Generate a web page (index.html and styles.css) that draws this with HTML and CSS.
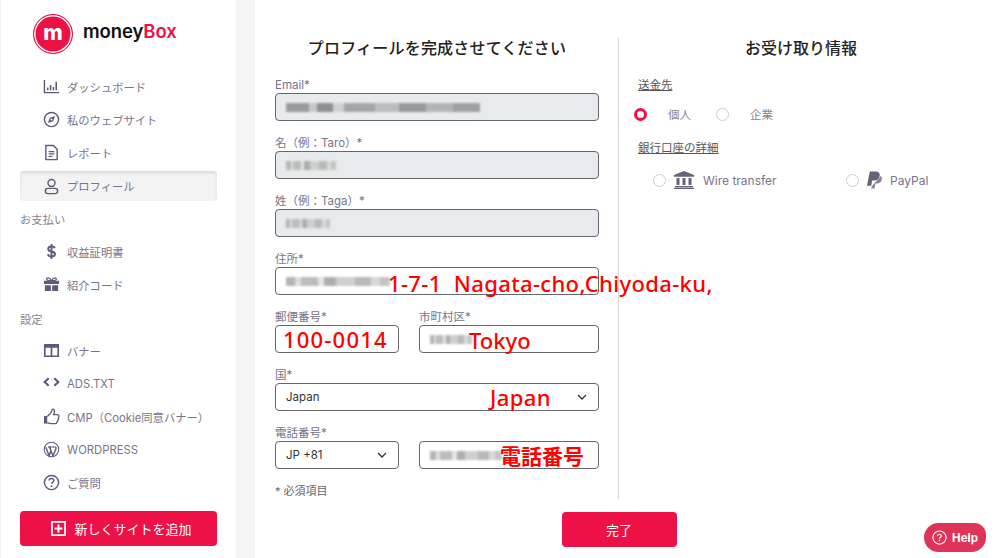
FILE: index.html
```html
<!DOCTYPE html>
<html lang="ja">
<head>
  <meta charset="UTF-8" />
  <meta name="viewport" content="width=device-width, initial-scale=1.0" />
  <title>moneyBox - プロフィール</title>
  <link rel="stylesheet" href="styles.css">
</head>
<body>
  <div class="app">
    <aside class="sidebar">
      <div class="logo">
        <div class="logo-mark"><span>m</span></div>
        <div class="logo-text">money<span>Box</span></div>
      </div>
      <nav class="nav">
        <a class="nav-item">
          <svg class="icon" viewBox="0 0 18 18"><path d="M1.5 2v13.5h15.5" fill="none" stroke="currentColor" stroke-width="1.5"/><path d="M5 10v3M8 7.5V13M11 9.5V13M14 4v9" fill="none" stroke="currentColor" stroke-width="1.6"/></svg>
          ダッシュボード
        </a>
        <a class="nav-item">
          <svg class="icon" viewBox="0 0 18 18"><circle cx="9" cy="9" r="7.5" fill="none" stroke="currentColor" stroke-width="1.5"/><path d="M12.8 5.2 10.8 10.8 5.2 12.8 7.2 7.2z" fill="currentColor"/><circle cx="9" cy="9" r="1" fill="#fff"/></svg>
          私のウェブサイト
        </a>
        <a class="nav-item">
          <svg class="icon" viewBox="0 0 18 18"><path d="M3 1.5h8l4 4v11H3z" fill="none" stroke="currentColor" stroke-width="1.5" stroke-linejoin="round"/><path d="M6 8h6M6 10.5h6M6 13h4" stroke="currentColor" stroke-width="1.3"/></svg>
          レポート
        </a>
        <a class="nav-item active">
          <svg class="icon" viewBox="0 0 18 18"><circle cx="9" cy="5.2" r="3.7" fill="none" stroke="currentColor" stroke-width="1.5"/><rect x="2.5" y="11" width="13" height="5.5" rx="2.7" fill="none" stroke="currentColor" stroke-width="1.5"/></svg>
          プロフィール
        </a>
        <div class="nav-title">お支払い</div>
        <a class="nav-item">
          <svg class="icon" viewBox="0 0 18 18"><path d="M12.5 5.5C12 4 10.7 3.6 9 3.6c-2 0-3.5 1-3.5 2.7 0 3.8 7.2 1.7 7.2 5.4 0 1.7-1.600 2.700-3.700 2.700-2 0-3.400-.8-3.800-2.400M9 1v16" fill="none" stroke="currentColor" stroke-width="2"/></svg>
          収益証明書
        </a>
        <a class="nav-item">
          <svg class="icon" viewBox="0 0 18 18"><path d="M1 5h16v3.500H1zM2 9.700h6.300V16H2zM9.700 9.700H16V16H9.700z" fill="currentColor"/><path d="M9 5C7 1 3.500 1.500 4 3.500 4.400 5 7 5 9 5c2 0 4.600 0 5-1.500C14.500 1.500 11 1 9 5z" fill="none" stroke="currentColor" stroke-width="1.400"/></svg>
          紹介コード
        </a>
        <div class="nav-title settings">設定</div>
        <a class="nav-item">
          <svg class="icon" viewBox="0 0 18 18"><path d="M1 2h16v14H1zM2.800 6v8.200h5.300V6zM9.900 6v8.200h5.300V6z" fill="currentColor" fill-rule="evenodd"/></svg>
          バナー
        </a>
        <a class="nav-item">
          <svg class="icon" viewBox="0 0 18 18"><path d="M6 3.500 1.800 7.500 6 11.500M12 3.500l4.200 4-4.200 4" fill="none" stroke="currentColor" stroke-width="2.200"/></svg>
          ADS.TXT
        </a>
        <a class="nav-item">
          <svg class="icon" viewBox="0 0 18 18"><path d="M1 8.500h3.500V16.500H1z" fill="currentColor"/><path d="M4.500 9 8 5.500c1-1.200 1.500-2.500 1.500-3.500 0-1.300 2.700-1 2.700 1.500 0 1.300-.7 2.500-1 3.500h4.300c1.700 0 1.700 2.300.7 3 .7 1 .3 2.200-.5 2.600.3 1-.2 2-1 2.300 0 1-.7 1.600-1.700 1.600H8c-1.500 0-2-.8-3.500-.8" fill="none" stroke="currentColor" stroke-width="1.400"/></svg>
          CMP（Cookie同意バナー）
        </a>
        <a class="nav-item">
          <svg class="icon" viewBox="0 0 18 18"><circle cx="9" cy="9" r="7.700" fill="none" stroke="currentColor" stroke-width="1.100"/><path d="M3 6.500 6.500 15.500 8.500 10 7 6.500M7 6.500 10.500 15.500 13.500 9c.7-1.500.200-2.500-.5-3.200M5.500 6.300h3.500M9.800 6.300h2.200" fill="none" stroke="currentColor" stroke-width="1.500"/></svg>
          WORDPRESS
        </a>
        <a class="nav-item">
          <svg class="icon" viewBox="0 0 18 18"><circle cx="9" cy="9" r="7.500" fill="none" stroke="currentColor" stroke-width="1.500"/><path d="M6.500 7c0-1.500 1.100-2.300 2.500-2.300s2.500.8 2.500 2.100c0 1.900-2.500 1.900-2.500 3.800" fill="none" stroke="currentColor" stroke-width="1.500"/><circle cx="9" cy="13" r="1" fill="currentColor"/></svg>
          ご質問
        </a>
      </nav>
      <button class="add-site">
        <svg class="add-icon" viewBox="0 0 15 15"><path d="M0 0h15v15H0zM1.800 1.800v11.400h11.400V1.800zM6.500 3.500h2v3h3v2h-3v3h-2v-3h-3v-2h3z" fill="#fff" fill-rule="evenodd"/></svg>
        新しくサイトを追加
      </button>
    </aside>

    <div class="gutter"></div>

    <main class="main">
      <div class="columns">
        <section class="form-col">
          <h2>プロフィールを完成させてください</h2>
          <div class="field">
            <label>Email*</label>
            <div class="input disabled"><span class="blur blur-dark w-email"></span></div>
          </div>
          <div class="field">
            <label>名（例：Taro）*</label>
            <div class="input disabled"><span class="blur w-short"></span></div>
          </div>
          <div class="field">
            <label>姓（例：Taga）*</label>
            <div class="input disabled"><span class="blur w-shorter"></span></div>
          </div>
          <div class="field">
            <label>住所*</label>
            <div class="input"><span class="blur w-addr"></span></div>
          </div>
          <div class="field-row">
            <div class="field small">
              <label>郵便番号*</label>
              <div class="input"></div>
            </div>
            <div class="field grow">
              <label>市町村区*</label>
              <div class="input"><span class="blur w-city"></span></div>
            </div>
          </div>
          <div class="field">
            <label>国*</label>
            <div class="input select">
              Japan
              <svg class="chev" viewBox="0 0 10 6"><path d="M1 1l4 4 4-4" fill="none" stroke="#333" stroke-width="1.300"/></svg>
            </div>
          </div>
          <div class="field-row">
            <div class="field small">
              <label>電話番号*</label>
              <div class="input select">
                JP +81
                <svg class="chev" viewBox="0 0 10 6"><path d="M1 1l4 4 4-4" fill="none" stroke="#333" stroke-width="1.300"/></svg>
              </div>
            </div>
            <div class="field grow no-label">
              <div class="input"><span class="blur w-phone"></span></div>
            </div>
          </div>
          <p class="required">* 必須項目</p>
        </section>

        <section class="pay-col">
          <h2>お受け取り情報</h2>
          <div class="sub-title">送金先</div>
          <div class="radio-row">
            <span class="radio checked"></span><span class="radio-label">個人</span>
            <span class="radio"></span><span class="radio-label">企業</span>
          </div>
          <div class="sub-title second">銀行口座の詳細</div>
          <div class="method-row">
            <div class="method wire">
              <span class="radio"></span>
              <svg class="method-icon" viewBox="0 0 20 18"><path d="M10 0 20 4v1.800H0V4zM2.500 7h3v7h-3zM8.500 7h3v7h-3zM14.500 7h3v7h-3zM1 15h18v1.300H1zM0 16.700h20V18H0z" fill="#65627a"/></svg>
              Wire transfer
            </div>
            <div class="method">
              <span class="radio"></span>
              <svg class="method-icon paypal" viewBox="0 0 16 18"><path d="M3 0h6c3.500 0 5 1.800 4.500 4.500C13 8 10.500 9.500 7.500 9.500H5.500L4.500 15H0z" fill="#65627a"/><path d="M14.500 4.800c1.300 1 1.700 2.300 1.300 4-.6 2.700-2.700 4-5.300 4H9l-.9 5.200H4.500l.4-2.200" fill="#8a879b"/></svg>
              PayPal
            </div>
          </div>
        </section>
      </div>
      <div class="actions">
        <button class="done">完了</button>
      </div>
    </main>
  </div>

  <!-- red notes written on top of the screenshot -->
  <span class="note note-addr">1-7-1&nbsp; Nagata-cho,Chiyoda-ku,</span>
  <span class="note note-zip">100-0014</span>
  <span class="note note-city">Tokyo</span>
  <span class="note note-country">Japan</span>
  <span class="note note-phone">電話番号</span>

  <div class="help">
    <svg class="help-icon" viewBox="0 0 16 16"><circle cx="8" cy="8" r="7" fill="none" stroke="#fff" stroke-width="1.200"/><path d="M6 6.300C6 5 7 4.500 8 4.500s2 .6 2 1.700C10 7.800 8 7.600 8 9.300" fill="none" stroke="#fff" stroke-width="1.200"/><circle cx="8" cy="11.300" r=".8" fill="#fff"/></svg>
    Help
  </div>
</body>
</html>
```

FILE: styles.css
```css
* {
  box-sizing: border-box;
}
html, body {
  height: 100%;
  overflow: hidden;
}
body {
  margin: 0;
  background: #fff;
  color: #5d5a72;
  font-family: Inter, "Noto Sans CJK JP", sans-serif;
  font-size: 12px;
}
.app {
  display: flex;
  height: 558px;
}

/* sidebar */
.sidebar {
  width: 236px;
  padding: 14px 19px 0 19px;
  border-left: 1px solid #f4f4f6;
  flex-shrink: 0;
}
.logo {
  display: flex;
  align-items: center;
  gap: 10px;
  padding-left: 13px;
  height: 40px;
}
.logo-mark {
  width: 40px;
  height: 40px;
  border-radius: 50%;
  background: #ee1148;
  border: 1px solid #ee1148;
  box-shadow: inset 0 0 0 1.500px #fff;
  color: #fff;
  display: flex;
  align-items: center;
  justify-content: center;
  font-size: 21px;
  font-weight: 800;
  line-height: 1;
}
.logo-mark span {
  margin-top: -3px;
}
.logo-text {
  color: #111;
  font-size: 18.500px;
  font-weight: 600;
  letter-spacing: -0.1px;
  margin-top: -7px;
}
.logo-text span {
  color: #ee1148;
}
.nav {
  margin-top: 16px;
  display: flex;
  flex-direction: column;
}
.nav-item {
  display: flex;
  align-items: center;
  height: 33px;
  padding-left: 23px;
  color: #77748a;
  font-size: 11.300px;
  gap: 7px;
}
.nav-item.active {
  height: 30px;
  margin: 2px 0 1px;
  background: #f3f3f4;
  border-radius: 4px;
  box-shadow: inset 0 2px 3px rgba(0, 0, 0, 0.1);
}
.icon {
  width: 17px;
  height: 17px;
  flex-shrink: 0;
  color: #5d5a7a;
}
.nav-title {
  height: 32px;
  margin-top: 1px;
  line-height: 34px;
  color: #85838f;
  font-size: 11.300px;
}
.nav-title.settings {
  line-height: 36px;
}
.add-site {
  display: flex;
  align-items: center;
  justify-content: center;
  gap: 8px;
  width: 197px;
  height: 35px;
  margin-top: 12px;
  padding-left: 12px;
  background: #ee1148;
  color: #fff;
  border: none;
  border-radius: 4px;
  font-family: inherit;
  font-size: 13px;
}
.add-icon {
  width: 15px;
  height: 15px;
}
.gutter {
  width: 19px;
  background: #f5f5f6;
  flex-shrink: 0;
}

/* main */
.main {
  flex: 1;
  padding: 38px 17px 0 20px;
}
.columns {
  display: flex;
  height: 461px;
}
h2 {
  margin: 0;
  color: #222;
  font-size: 16px;
  font-weight: 500;
  text-align: center;
  line-height: 20px;
}
.form-col {
  width: 344px;
  padding-right: 19px;
  border-right: 1px solid #d6d6d6;
}
.field {
  height: 58px;
  padding-top: 2px;
}
.form-col h2 {
  margin-bottom: 17px;
  letter-spacing: 0.2px;
}
.field label {
  display: block;
  height: 16px;
  line-height: 16px;
  color: #77748a;
  font-size: 11.500px;
}
.input {
  height: 28px;
  border: 1px solid #66666c;
  border-radius: 4px;
  background: #fff;
  padding: 0 10px;
  display: flex;
  align-items: center;
  color: #333;
  font-size: 11.500px;
}
.input.disabled {
  background: #e8ebee;
}
.field-row {
  display: flex;
  gap: 20px;
}
.small {
  width: 124px;
}
.grow {
  flex: 1;
}
.no-label {
  padding-top: 18px;
}
.select {
  justify-content: space-between;
}
.chev {
  width: 10px;
  height: 6px;
  margin-right: 1px;
}
.blur {
  display: block;
  height: 9px;
  filter: blur(1px);
  background: linear-gradient(90deg, #b5b5b5 0 9%, #dedede 9% 14%, #bdbdbd 14% 31%, #e4e4e4 31% 37%, #aeaeae 37% 48%, #cfcfcf 48% 66%, #b9b9b9 66% 82%, #d9d9d9 82% 90%, #c4c4c4 90%);
}
.blur-dark {
  background: linear-gradient(90deg, #9a9a9e 0 12%, #c8c8cb 12% 16%, #8f8f93 16% 24%, #d0d0d3 24% 30%, #a5a5a9 30% 46%, #bcbcc0 46% 58%, #99999d 58% 72%, #b4b4b8 72% 86%, #a0a0a4 86%);
}
.w-email { width: 194px; }
.w-short { width: 50px; }
.w-shorter { width: 44px; }
.w-addr { width: 104px; }
.w-city { width: 42px; }
.w-phone { width: 72px; }
.required {
  margin: 1px 0 0;
  font-size: 11px;
  color: #66646f;
}

/* right column */
.pay-col {
  flex: 1;
  padding-left: 19px;
}
.pay-col h2 {
  margin-left: -19px;
}
.sub-title {
  margin-top: 20px;
  color: #555;
  font-size: 11.500px;
  line-height: 14px;
  text-decoration: underline;
}
.sub-title.second {
  margin-top: 19px;
}
.radio-row {
  display: flex;
  align-items: center;
  margin: 14px 0 0 -4px;
  height: 16px;
}
.radio {
  display: block;
  width: 13px;
  height: 13px;
  border-radius: 50%;
  border: 1px solid #ccc;
  flex-shrink: 0;
}
.radio.checked {
  border: 3.500px solid #ee1148;
}
.radio-label {
  color: #85838f;
  font-size: 11.500px;
  width: 69px;
  padding-left: 21px;
}
.method-row {
  display: flex;
  margin-top: 15px;
  padding-left: 15px;
}
.method {
  display: flex;
  align-items: center;
  gap: 8px;
  color: #77748a;
  font-size: 12px;
  height: 20px;
}
.method.wire {
  width: 193px;
}
.method-icon {
  width: 20px;
  height: 18px;
  margin-right: 1px;
}
.method-icon.paypal {
  width: 15px;
  margin-right: 0;
}
.actions {
  display: flex;
  justify-content: center;
  margin-top: 13px;
  padding-right: 20px;
}
.done {
  width: 115px;
  height: 35px;
  background: #ee1148;
  color: #fff;
  border: none;
  border-radius: 4px;
  font-family: inherit;
  font-size: 13px;
}

/* overlays */
.note {
  position: absolute;
  color: #f00;
  font-family: "Noto Sans", "Noto Sans CJK JP", sans-serif;
  font-size: 22px;
  font-weight: 500;
  line-height: 24px;
  white-space: nowrap;
}
.note-addr { left: 388px; top: 271px; letter-spacing: 0.360px; }
.note-zip { left: 283px; top: 327px; letter-spacing: 1.200px; }
.note-city { left: 469px; top: 328px; }
.note-country { left: 490px; top: 385px; letter-spacing: 0.400px; }
.note-phone { left: 500px; top: 444px; font-size: 21px; font-weight: 700; }
.help {
  position: absolute;
  left: 924px;
  top: 523px;
  width: 62px;
  height: 29px;
  border-radius: 15px 12px 15px 15px;
  background: #df3358;
  color: #fff;
  font-size: 11.500px;
  font-weight: 700;
  display: flex;
  align-items: center;
  justify-content: center;
  gap: 5px;
}
.help-icon {
  width: 15px;
  height: 15px;
}
```
